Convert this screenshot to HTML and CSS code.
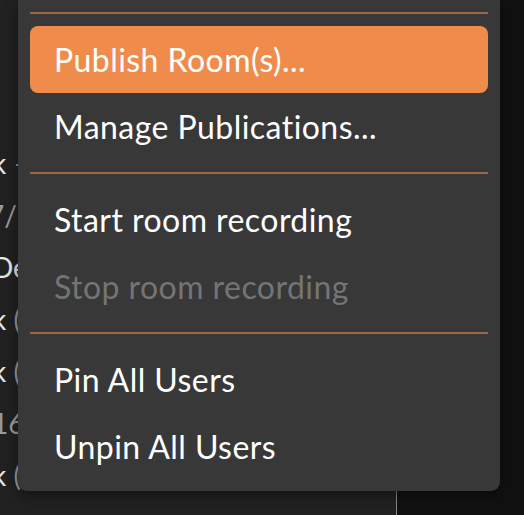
FILE: index.html
```html
<!DOCTYPE html>
<html>
<head>
<meta charset="utf-8">
<link rel="stylesheet" href="styles.css">
</head>
<body>
<div class="app">
  <div class="sidebar">
    <div class="row r1"><span class="w">k</span> <span class="g">–</span></div>
    <div class="row r2"><span class="g">7/16/2024</span></div>
    <div class="row r3"><span class="w">De</span><span class="g">sk</span></div>
    <div class="row r4"><span class="w">k</span> <span class="g">(2)</span></div>
    <div class="row r5"><span class="w">k</span> <span class="g">(3)</span></div>
    <div class="row r6"><span class="g">16</span></div>
    <div class="row r7"><span class="w">k</span> <span class="g">(4/5)</span></div>
  </div>
  <div class="main"></div>
</div>
<div class="menu">
  <div class="sep"></div>
  <div class="item active">Publish Room(s)...</div>
  <div class="item">Manage Publications...</div>
  <div class="sep"></div>
  <div class="item">Start room recording</div>
  <div class="item disabled">Stop room recording</div>
  <div class="sep"></div>
  <div class="item">Pin All Users</div>
  <div class="item">Unpin All Users</div>
</div>
</body>
</html>
```
FILE: styles.css
```css
html, body {
  margin: 0;
  padding: 0;
}
body {
  width: 524px;
  height: 515px;
  overflow: hidden;
  background: #111111;
  font-family: Lato, "Noto Sans", sans-serif;
  font-variant-ligatures: none;
  position: relative;
}
.app {
  display: flex;
  height: 515px;
}
.sidebar {
  width: 397px;
  background: #212121;
  border-right: 1px solid #8a8a8a;
  padding-top: 148px;
  box-sizing: border-box;
  display: flex;
  flex-direction: column;
  gap: 22px;
}
.main {
  flex: 1;
  background: #111111;
}
.row {
  font-size: 28px;
  line-height: 30px;
  white-space: nowrap;
  margin-left: -8px;
}
.row.r2 {
  margin-left: -12px;
}
.row .w { color: #e6e6e6; }
.row .g { color: #9a9a9a; }
.menu {
  position: absolute;
  left: 18px;
  top: 0;
  width: 482px;
  box-sizing: border-box;
  padding: 0 12px 11px;
  background: #383838;
  border-radius: 0 0 9px 9px;
  box-shadow: 0 4px 14px rgba(0, 0, 0, 0.45);
}
.sep {
  height: 26px;
  display: flex;
  align-items: center;
}
.sep::before {
  content: "";
  display: block;
  width: 100%;
  height: 2px;
  background: #a0663f;
}
.item {
  height: 67px;
  display: flex;
  align-items: center;
  padding-left: 24px;
  border-radius: 8px;
  color: #ffffff;
  font-size: 32px;
  letter-spacing: 0.45px;
  white-space: nowrap;
}
.item.active {
  background: #f08c4b;
}
.item.disabled {
  color: #747474;
}
```
